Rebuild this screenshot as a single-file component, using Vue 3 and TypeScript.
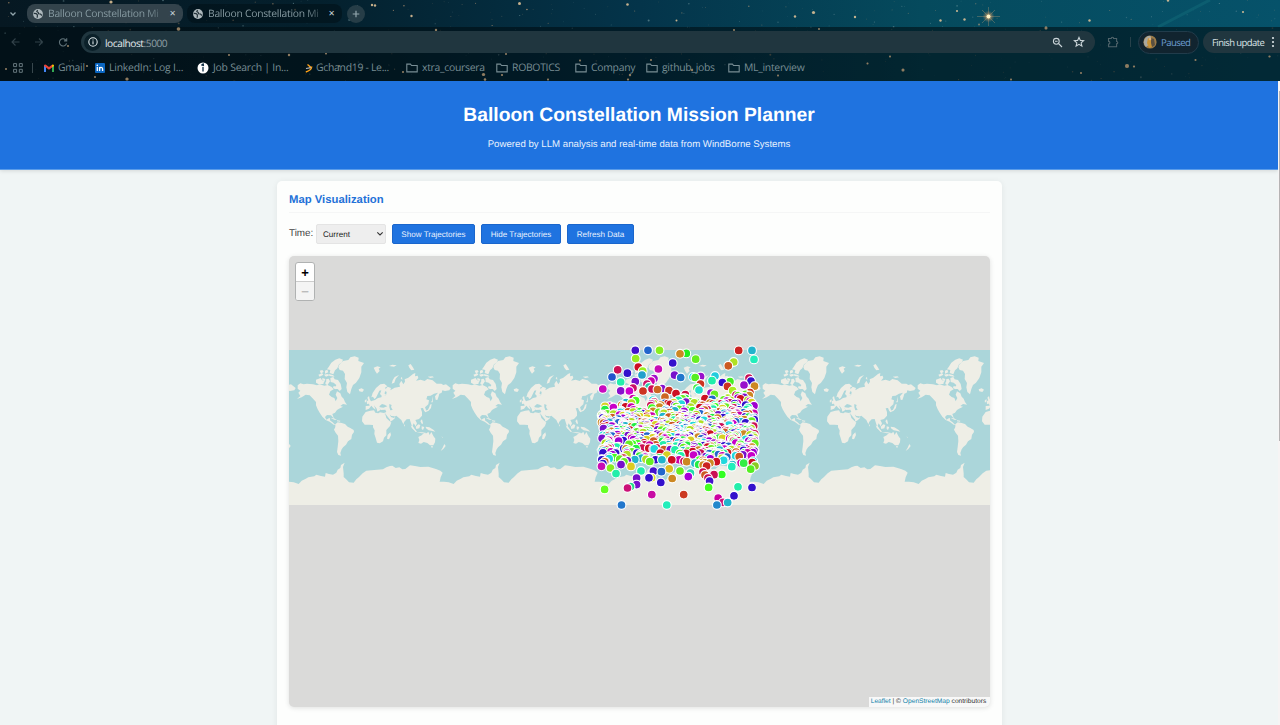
<script setup lang="ts">
interface Dot { x: number; y: number; c: string }
interface Star { x: number; y: number; r: number; o: number; c: string }

function rng(seed: number): () => number {
  let s = seed
  return () => {
    s = (s * 1664525 + 1013904223) % 4294967296
    return s / 4294967296
  }
}

const palette = [
  '#3311cc', '#cc00aa', '#cc1122', '#22eeaa', '#66ee22', '#2266cc', '#7711cc', '#cc1155',
  '#22b4cc', '#22ee44', '#cc5a22', '#cc8822', '#b0e022', '#d8d022', '#c800c8', '#22d8dd', '#44ff22', '#a000d0',
]

// Markers that stand clear of the main swarm: x, y, colour
const singles: [number, number, string][] = [
  [635.3, 350.3, '#4411cc'], [648, 350.3, '#2266cc'], [659.5, 350.3, '#88ee22'], [635.7, 358.6, '#99ee22'],
  [638.3, 367, '#cc1122'], [617.7, 369.8, '#cc1155'], [627.4, 373.2, '#3311cc'], [642.7, 371, '#99ee22'],
  [642, 375, '#22a0cc'], [658.4, 369, '#c80cb4'], [672.7, 363, '#3311cc'], [686.3, 353.4, '#22ee22'],
  [680, 353.8, '#cc8822'], [695.7, 359.2, '#66ee22'], [612, 377, '#2255cc'], [620.7, 382, '#22eeaa'],
  [635.3, 381.6, '#7711cc'], [602.8, 389, '#c80cc0'], [620.7, 390.8, '#8811cc'], [629.4, 391, '#cc00cc'],
  [674.5, 375.1, '#7711cc'], [680.7, 377.5, '#2277cc'], [700.6, 376.5, '#9911cc'], [693, 377, '#22ddee'],
  [695.2, 377.5, '#55ee22'], [715, 376, '#22ccdd'], [712, 380.7, '#22eeaa'], [738.7, 350.4, '#cc2222'],
  [752, 350.4, '#22b4cc'], [754, 359.4, '#22eebb'], [733.7, 362, '#b0e022'], [728.3, 365.8, '#cc5a22'],
  [722.4, 382.5, '#3311cc'], [730, 381.5, '#44ee22'], [727.5, 386.4, '#cc3322'], [732.7, 390.7, '#aaee22'],
  [749, 378, '#cc1155'], [751, 381, '#3311cc'], [744, 385, '#9911cc'], [754.5, 386.2, '#cc8822'],
  [750, 392.5, '#cc3322'], [654, 378.5, '#a011cc'], [651, 381, '#cc00aa'], [647, 384, '#cc1166'],
  [649, 387, '#22ccaa'], [652, 389, '#cc1155'], [643, 391, '#cc3322'], [657.5, 389.5, '#cc6622'],
  [662, 388.5, '#8811cc'], [669, 390.5, '#cc3322'], [676, 393.5, '#cc1122'], [685.3, 394.6, '#cc1144'],
  [700.5, 384, '#cc3322'], [699, 390, '#22ddcc'], [711, 393, '#9911cc'], [714.5, 394.4, '#66ee22'],
  [633, 388, '#cc1166'], [665, 397, '#cc6622'], [697, 388, '#44ee44'], [736, 395, '#cc1155'],
  [601.8, 459.8, '#3311cc'], [601.5, 466.3, '#c80cb4'], [610.5, 468, '#88ee22'], [616, 473.6, '#22eeaa'],
  [614.5, 457.6, '#44ff22'], [624, 461.8, '#66ee22'], [631, 466.4, '#ddcc22'], [641, 471, '#22eeaa'],
  [653.4, 471.2, '#4411cc'], [661.4, 471.7, '#2266cc'], [669.2, 468.8, '#ddbb22'], [680, 471, '#66ee22'],
  [677.7, 459.3, '#4411cc'], [639.5, 456, '#33ee33'], [702.8, 462.3, '#ddbb22'], [706.6, 466, '#cc2222'],
  [716.3, 461.7, '#cc1122'], [731.8, 466.7, '#22eebb'], [743.7, 463.2, '#33ee44'], [750.7, 469.2, '#55ee22'],
  [755, 466, '#88cc22'], [690.5, 473, '#22ddaa'], [688.3, 476.6, '#a800d8'], [672.2, 478.5, '#cc8822'],
  [651.7, 477.8, '#dde022'], [649, 477.8, '#3311cc'], [660.8, 482.5, '#3311cc'], [636.6, 478, '#7711cc'],
  [636.6, 484.6, '#7711cc'], [630.5, 486.5, '#22dd88'], [627.5, 488, '#cc1177'], [604.6, 489.4, '#66ff22'],
  [651.8, 494.6, '#c80ca4'], [683.7, 494.6, '#cc3a22'], [621.5, 505, '#2277cc'], [666.8, 505, '#22eebb'],
  [703, 472, '#cc1155'], [705, 475, '#cc5a22'], [708, 478, '#cc1155'], [709.6, 481, '#4411cc'],
  [714, 474.7, '#cc1155'], [721.8, 474.5, '#33ff22'], [708.6, 487.5, '#44ff22'], [738, 486.8, '#22eeaa'],
  [752, 487.5, '#3311cc'], [734, 495.8, '#3311cc'], [718.2, 498.2, '#cc00a0'], [723, 502.4, '#cc1177'],
  [716.9, 505, '#2288cc'], [727.7, 502.5, '#22b4cc'],
]

const rand = rng(42)
const dots: Dot[] = singles.map(([x, y, c]) => ({ x: x - 289, y: y - 256, c }))
for (let i = 0; i < 900; i++) {
  const t = (rand() + rand()) / 2
  const x = 601.5 + rand() * 153.5
  let y = 388 + t * 82
  const top = x < 625 ? 405 : x < 735 ? 398 : 392
  if (y < top) y = top + rand() * 55
  if (y > 466) y = 412 + rand() * 52
  dots.push({ x: x - 289, y: y - 256, c: palette[Math.floor(rand() * palette.length)] })
}
dots.sort((a, b) => a.y - b.y)

const rs = rng(7)
const stars: Star[] = []
for (let i = 0; i < 420; i++) {
  stars.push({
    x: rs() * 1280,
    y: rs() * 81,
    r: 0.3 + rs() * rs() * 0.8,
    o: 0.2 + rs() * 0.55,
    c: rs() > 0.5 ? '#d9ab7d' : '#7fa3a8',
  })
}
const bright: [number, number, number][] = [
  [519.5, 3.5, 1.5], [627.5, 4.5, 1.3], [411.5, 16, 1.2], [813.5, 12.5, 1.6], [795, 16.5, 1.2], [676.5, 20.5, 1],
  [855, 17, 1.2], [940.5, 20.5, 1.2], [957, 11, 1.1], [964.5, 19.5, 1.2], [1089.5, 20.5, 1.2], [1168, 0.5, 1.2],
  [178.5, 29, 1.8], [111, 2, 1.6], [483.5, 74.5, 1.6], [485, 79.5, 1.2], [127, 79, 1.6], [289, 55, 1.2],
  [1127, 66, 2], [903, 70, 1.5], [1046, 28, 1.5], [372, 5, 1.2], [375, 5.5, 1.2], [1243, 12, 1.1], [630, 75, 1.2],
  [436, 30, 1.2], [229, 55, 1], [326, 53.5, 1], [506, 54, 1], [734, 30, 1], [819, 29, 1], [867.500, 63.500, 1],
  [890, 56.500, 1], [1081, 73, 1], [1134, 66.500, 1.1], [1195.500, 60, 1], [1269.500, 56.500, 1.1], [628, 79.500, 1.1],
  [502, 75, 1.1], [548, 79.500, 1], [651, 60, 1], [580, 60.500, 1], [778, 75.500, 1], [87, 66, 1.1], [1011, 79.500, 1],
  [6, 69, 1], [95, 77, 1], [134, 52, 1], [68, 46, 1], [339, 66, 1], [310, 67, 1], [692, 70, 1.2], [403, 72, 1],
]
const dimmed = bright.filter((p) => p[1] > 27)
const worlds = [-1, 0, 1, 2, 3, 4]
const folders = [
  { t: 'xtra_coursera', w: 'f1' }, { t: 'ROBOTICS', w: 'f2' }, { t: 'Company', w: 'f3' },
  { t: 'github_jobs', w: 'f4' }, { t: 'ML_interview', w: 'f5' },
]
</script>

<template>
  <div class="screen">
    <div class="chrome">
      <svg class="sky" width="1280" height="81" viewBox="0 0 1280 81">
        <defs>
          <linearGradient id="skyg" x1="0" x2="1" y1="0" y2="0">
            <stop offset="0" stop-color="#061822" />
            <stop offset=".25" stop-color="#04202d" />
            <stop offset=".5" stop-color="#04344a" />
            <stop offset=".72" stop-color="#054a5d" />
            <stop offset="1" stop-color="#06526a" />
          </linearGradient>
          <radialGradient id="glow"><stop offset="0" stop-color="#ffe9b0" /><stop offset=".35" stop-color="#e0a868" stop-opacity=".6" /><stop offset="1" stop-color="#b08060" stop-opacity="0" /></radialGradient>
        </defs>
        <rect width="1280" height="81" fill="url(#skyg)" />
        <path d="M1158 27L1210 0" stroke="#1b7d85" stroke-width="3" opacity=".3" />
        <circle v-for="(s, i) in stars" :key="i" :cx="s.x" :cy="s.y" :r="s.r" :fill="s.c" :opacity="s.o" />
        <g fill="#e8c79a"><circle v-for="(b, i) in bright" :key="i" :cx="b[0]" :cy="b[1]" :r="b[2]" opacity=".85" /></g>
        <g stroke="#d8ab78" stroke-width=".6" opacity=".5"><path d="M977 16.500h23M988.500 7v19M982 10l13 13M982 23l13-13" /></g>
        <circle cx="988.500" cy="16.500" r="6" fill="url(#glow)" /><circle cx="988.500" cy="16.500" r="2" fill="#fff4c8" />
        <rect y="27" width="1280" height="54" fill="#000c12" opacity=".58" />
        <g fill="#c9a67c" opacity=".5"><circle v-for="(b, i) in dimmed" :key="i" :cx="b[0]" :cy="b[1]" :r="b[2]" /></g>
      </svg>

      <div class="tabs">
        <svg class="chev" width="8" height="6" viewBox="0 0 8 6"><path d="M1.500 1.500L4 4l2.500-2.500" /></svg>
        <div class="tab lit">
          <svg class="globe" width="10" height="10" viewBox="0 0 10 10"><circle cx="5" cy="5" r="4.900" /><path d="M.8 4.400l2.400.2 1.200 1.300-.2 2.800M4.600 1l-.8 1.500 1.500 1 .2 1.300 2 .2 1.400 1.500" /></svg>
          <span class="tt">Balloon Constellation Mi</span><span class="x">✕</span>
        </div>
        <div class="tab cur">
          <svg class="globe" width="10" height="10" viewBox="0 0 10 10"><circle cx="5" cy="5" r="4.900" /><path d="M.8 4.400l2.400.2 1.200 1.300-.2 2.800M4.600 1l-.8 1.500 1.500 1 .2 1.300 2 .2 1.400 1.500" /></svg>
          <span class="tt">Balloon Constellation Mi</span><span class="x">✕</span>
        </div>
        <div class="plus"><svg width="8" height="8" viewBox="0 0 8 8"><path d="M4 .7v6.600M.7 4h6.600" /></svg></div>
      </div>

      <div class="toolbar">
        <svg class="nav" width="62" height="12" viewBox="0 0 62 12">
          <g opacity=".38"><path d="M11.500 6H4M7.500 2.500L4 6l3.500 3.500M27 6h7.500M31 2.500L34.500 6 31 9.500" /></g>
          <path d="M58.500 4A3.600 3.600 0 1 0 59 7M59.200 2v2.600h-2.700" opacity=".75" transform="translate(-.5 .3)" />
        </svg>
        <div class="url">
          <span class="info"><svg width="10" height="10" viewBox="0 0 10 10"><circle cx="5" cy="5" r="4.200" /><path d="M5 4.300v3M5 2.500v1" /></svg></span>
          <span class="addr"><b>localhost</b>:5000</span>
          <svg class="mag" width="11" height="11" viewBox="0 0 11 11"><circle cx="4.300" cy="4.300" r="2.900" /><path d="M6.500 6.500l3.500 3.500M3 4.300h2.600" /></svg>
          <svg class="star" width="12" height="12" viewBox="0 0 12 12"><path d="M6 1.400l1.350 3 3.250.3-2.450 2.150.75 3.200L6 8.350l-2.900 1.700.75-3.200L1.400 4.700l3.250-.3z" /></svg>
        </div>
        <svg class="ext" width="12" height="12" viewBox="0 0 12 12"><path d="M1.500 2.500h2.700a1.200 1.200 0 0 1 2.400 0h3v3a1.200 1.200 0 0 1 0 2.400v2.800h-8V8a1.300 1.300 0 0 0 0-2.600z" /></svg>
        <i class="vbar"></i>
        <div class="paused">
          <svg width="14" height="14" viewBox="0 0 14 14"><circle cx="7" cy="7" r="6.600" fill="#9a7a48" /><path d="M2 3.500Q5-.5 8 1.500L7 9 3 12Q-.8 8 2 3.500" fill="#a9a9a0" /><path d="M5 3l4 2v7l-3 1-2-5z" fill="#c79338" /><path d="M8 3l3 1 1 6-3 2-1-4z" fill="#5a5040" /><circle cx="7" cy="4" r="1.300" fill="#ddb077" /></svg>
          <span>Paused</span>
        </div>
        <div class="finish"><span>Finish update</span><svg width="4" height="12" viewBox="0 0 4 12"><circle cx="2" cy="2" r="1.100" /><circle cx="2" cy="6" r="1.100" /><circle cx="2" cy="10" r="1.100" /></svg></div>
      </div>

      <div class="marks">
        <svg class="grid" width="10" height="10" viewBox="0 0 10 10"><path d="M.6.6h3v3h-3zM6.300.6h3v3h-3zM.6 6.300h3v3h-3zM6.300 6.300h3v3h-3z" /></svg>
        <i class="sep"></i>
        <div class="bm b1"><svg width="10" height="8" viewBox="0 0 10 8"><path d="M0 1v7h2V3z" fill="#4285f4" /><path d="M8 3v5h2V1z" fill="#34a853" /><path d="M0 1.200Q.8-.2 2 .8l3 2.300L8 .8v2.600L5 5.700 0 2z" fill="#ea4335" /><path d="M8 .8q1.300-1 2 .4V2L8 3.500z" fill="#fbbc04" /></svg><span>Gmail</span></div>
        <div class="bm b2"><svg width="10" height="10" viewBox="0 0 10 10"><rect width="10" height="10" rx="1" fill="#0a66c2" /><path d="M2.300 4v4M4.600 8V4M4.600 6q.2-1.800 1.600-1.600Q7.600 4.500 7.600 6v2" stroke="#fff" stroke-width="1.300" fill="none" /><circle cx="2.300" cy="2.400" r=".8" fill="#fff" /></svg><span>LinkedIn: Log I...</span></div>
        <div class="bm b3"><svg width="12" height="12" viewBox="0 0 12 12"><circle cx="6" cy="6" r="5.500" fill="#fff" /><circle cx="6.100" cy="3.300" r="1" fill="#0a2a40" /><path d="M6 5v4.500M4.500 3.500Q5 2 7 2" stroke="#0a2a40" stroke-width="1.300" fill="none" /></svg><span>Job Search | In...</span></div>
        <div class="bm b4"><svg width="9" height="10" viewBox="0 0 9 10"><path d="M2.500 1.500L5.500 4M6.800 3.500q-.5 4-6 5.500" stroke="#ffa116" stroke-width="1.400" fill="none" /><path d="M1 5.500l5-.8" stroke="#b8b8b8" stroke-width="1.200" /></svg><span>Gchand19 - Le...</span></div>
        <div v-for="f in folders" :key="f.t" :class="['bm', f.w]">
          <svg class="folder" width="12" height="10" viewBox="0 0 12 10"><path d="M.8 8.900V1.100h3.600l1.200 1.400h5.600v6.400z" /></svg><span>{{ f.t }}</span>
        </div>
      </div>
    </div>

    <div class="page">
      <header>
        <h1>Balloon Constellation Mission Planner</h1>
        <p>Powered by LLM analysis and real-time data from WindBorne Systems</p>
      </header>
      <main>
        <h2>Map Visualization</h2>
        <div class="controls">
          <label>Time:</label>
          <div class="select"><span>Current</span><svg width="8" height="6" viewBox="0 0 8 6"><path d="M1.300 1.300L4 4l2.700-2.700" /></svg></div>
          <button class="k1">Show Trajectories</button>
          <button class="k2">Hide Trajectories</button>
          <button class="k3">Refresh Data</button>
        </div>
        <div class="map">
          <svg class="tiles" width="701" height="155" viewBox="12 16 2103 465">
            <defs>
              <g id="land">
                <!-- North America -->
                <path d="M38 122L46 116 56 119 66 117 84 119 96 122 104 119 118 123 128 121 140 127 146 134 136 140 132 150 140 157 148 160 152 170 157 160 152 150 156 140 166 146 170 156 176 162 180 172 186 180 174 178 166 184 174 186 162 192 156 196 150 204 142 208 147 222 138 212 126 211 120 217 124 225 134 219 136 228 142 232 148 238 154 240 146 240 134 231 122 226 112 216 104 204 98 194 93 182 93 172 82 160 74 152 62 150 50 158 36 163 46 154 40 144 46 138 38 132z" />
                <!-- Canadian Arctic -->
                <path d="M93 105l14-5 4 7 7 2-3 9-14 1-8-5zM112 100l9 3-2 6-7-3zM104 78l8-2 4 5-8 6zM120 78l7-3 3 8-10 4zM100 90l12-4 3 4-11 6zM117 90l10-2 6 4-10 4zM130 88l14 3 5 5-15-2zM136 100l9-3 4 7 10 2 8 12 3 15-6 6-6-6-8-4 4-8-8-7-9-2zM124 103l7-1 4 8-7 10-5-6zM131 67l8-13 12-9 12-4 11 4-4 9-8 5-5 12-7 6-5 12-11-4 2-9-10-2zM122 112l8 2-2 8-7-4zM146 124l8 2-3 8-7-4zM107 110l12-2-2 5-9 2z" />
                <!-- Greenland, Iceland, Cuba -->
                <path d="M162 61L174 49 190 46 196 38 209 35 221 39 220 49 237 55 229 66 229 83 223 100 213 114 204 121 199 133 195 149 187 142 184 128 186 115 179 103 180 88 174 78 164 76 160 68zM221 134l9-3 7 4-5 7-9-2zM137 220l10 1 9 5-8-1zM156 227l10 1-1 3-9-1z" />
                <!-- South America -->
                <path d="M151 239L158 233 170 235 180 238 188 246 196 250 206 256 207 262 201 270 199 283 189 290 183 300 175 307 170 314 166 325 168 333 160 331 156 322 158 307 160 289 159 273 152 264 147 255 151 247z" />
                <!-- Africa, Madagascar -->
                <path d="M242 202L256 198 267 197 271 204 280 206 285 203 297 205 303 217 309 231 319 233 315 244 304 256 304 272 297 279 294 290 284 296 276 294 272 280 268 268 269 257 264 248 264 241 252 240 239 240 231 230 232 216zM316 263l2 8-6 13-6-2 2-11z" />
                <!-- British Isles, Nordic countries -->
                <path d="M245 170l5-3-3-8 5-5 2 9 5 9-8 5-5 1zM239 168l5-5 1 6-5 5zM259 158L263 145 273 130 286 119 298 117 307 125 300 129 304 136 298 146 304 151 291 154 285 148 289 137 283 138 278 149 273 159 268 163 264 156z" />
                <!-- Eurasia -->
                <path d="M242 196L242 184 254 183 251 175 260 169 270 166 279 160 289 158 291 151 303 152 305 143 300 135 308 126 318 130 316 137 329 129 345 126 343 118 349 108 355 119 360 111 359 104 370 99 384 88 391 85 390 95 398 93 400 100 393 108 407 105 419 109 427 103 443 107 455 117 469 117 475 121 483 119 497 130 493 137 480 139 472 137 470 144 463 147 461 155 457 166 452 165 450 155 459 144 447 147 437 153 427 154 424 164 432 167 430 179 420 188 424 198 418 200 414 190 407 191 411 202 411 213 402 223 391 226 396 236 392 245 386 236 383 243 389 255 383 252 379 239 374 223 365 224 358 231 355 239 349 226 341 219 334 213 326 217 331 219 323 227 309 235 303 226 299 213 297 205 304 202 301 195 287 196 282 186 286 196 277 201 275 192 267 182 272 195 265 190 259 183 252 192z" />
                <!-- Seas cut out of Eurasia -->
                <path class="sea" d="M283 185l8-7 8 2 8 5-12 4-10-1zM313 178l7 3-2 6 5 9-7 1-3-9zM300 205l7 10 9 11-2 4-10-10zM314 209l5 5 10 1-2 5-9-3z" />
                <!-- Arctic islands -->
                <path d="M266 69l11-4 10 3-6 4 3 7-8 8-5-7zM312 64l10-4 13 2-8 4zM320 117l3-10 6-10 13-6-10 11-4 12zM370 62l7-4 6 9 5 8-9 2-6-8zM428 96l14-1 5 3-11 2zM347 101l4-5 1 10z" />
                <!-- Japan, South-East Asia -->
                <path d="M435 180l5-2-2 12-7 8-10 5-2-3 10-5 4-8zM438 173l4-6-1-13 3 11-1 8zM377 242l9 7 10 12-4 1-12-13zM392 246l8-7 6 2-3 10-9 2zM406 229l5-5 3 12-3 3zM410 245l8 2-4 9-4-3zM422 246l11 2 12 7 6 6-12-3-8-1-8-6zM394 262l18 1 12 2-13 1zM356 239l4 2-1 5z" />
                <!-- Australia, New Zealand -->
                <path d="M400 277L410 272 417 265 425 266 430 261 434 271 439 262 445 274 451 282 450 293 445 302 435 302 427 295 416 292 408 297 400 295 403 286zM438 304l6 1-3 6zM478 298l4 6-7 9-8 6 6-10zM469 274l5 5-1 1z" />
                <!-- Antarctica -->
                <path d="M12 411L26 413 41 418 50 408 61 403 70 398 88 395 94 390 108 394 120 396 122 385 132 388 144 390 154 384 158 375 166 370 168 361 179 354 174 367 176 386 176 397 185 405 192 413 206 414 214 404 222 397 233 386 244 378 268 376 294 374 304 368 315 364 322 363 332 370 343 368 352 374 361 373 375 362 390 364 406 367 430 366 443 370 455 374 466 378 473 384 467 398 464 411 477 411 477 481 12 481z" />
              </g>
            </defs>
            <rect x="12" y="16" width="2103" height="465" fill="#abd6da" />
            <use v-for="k in worlds" :key="k" href="#land" :x="k * 465" />
          </svg>
          <svg class="dots" width="701" height="451" viewBox="0 0 701 451">
            <circle v-for="(d, i) in dots" :key="i" :cx="d.x" :cy="d.y" r="4.400" :fill="d.c" />
          </svg>
          <div class="zoom"><span>+</span><span class="off">−</span></div>
          <div class="attr"><a>Leaflet</a> | © <a>OpenStreetMap</a> contributors</div>
        </div>
      </main>
      <div class="scroll"><i></i></div>
    </div>
  </div>
</template>

<style>
html, body { margin: 0; overflow: hidden; }
</style>
<style scoped>
* { box-sizing: border-box; }
.screen { width: 1280px; height: 725px; overflow: hidden; display: flex; flex-direction: column; font-family: "Liberation Sans", Arial, sans-serif; text-rendering: geometricPrecision; }
.chrome { position: relative; height: 81px; flex: none; font-family: "Open Sans", "Noto Sans", sans-serif; font-size: 10.3px; color: #7d9299; overflow: hidden; }
.sky { position: absolute; left: 0; top: 0; }
svg { display: block; flex: none; }
.tabs, .toolbar, .marks { position: relative; display: flex; align-items: center; }
.tabs > *, .toolbar > *, .marks > * { flex: none; }
.tabs { height: 27px; padding-left: 9px; }
.chev { fill: none; stroke: #91a5ac; stroke-width: 1.3; margin-right: 10px; }
.tab { display: flex; align-items: center; height: 19px; width: 156px; padding: 0 6px 0 6px; border-radius: 8px; }
.lit { background: rgba(55, 71, 79, .92); }
.cur { margin-left: 4px; width: 155px; background: rgba(0, 14, 20, .5); }
.globe circle { fill: #aeb9bd; }
.globe path { fill: none; stroke: #25343b; stroke-width: 1.2; }
.tt { flex: 1; margin-left: 5px; white-space: nowrap; font-size: 10.3px; letter-spacing: -.25px; color: #869aa1; -webkit-mask-image: linear-gradient(90deg, #000 82%, transparent); mask-image: linear-gradient(90deg, #000 82%, transparent); }
.x { width: 9px; flex: none; text-align: center; font-family: "DejaVu Sans", sans-serif; font-size: 8px; color: #c5d0d4; }
.plus { width: 18px; height: 18px; margin-left: 5px; border-radius: 50%; background: #263d47; display: grid; place-items: center; }
.plus svg { stroke: #93a7ae; stroke-width: 1.2; }
.toolbar { height: 30px; }
.nav { margin-left: 8px; fill: none; stroke: #80939a; stroke-width: 1.1; }
.url { display: flex; align-items: center; width: 1014px; height: 22px; margin-left: 11px; padding: 0 10px 0 3px; border-radius: 11px; background: #20363f; color: #8d9da3; }
.info { width: 17px; height: 17px; border-radius: 50%; background: #0b2029; display: grid; place-items: center; margin-right: 4px; }
.info svg { fill: none; stroke: #dce5e8; stroke-width: 1.1; }
.addr { flex: 1; font-size: 10.2px; letter-spacing: -.46px; padding-top: 1px; }
.addr b { font-weight: 400; color: #e2eaed; }
.mag, .star { fill: none; stroke: #c9d4d8; stroke-width: 1.1; }
.mag { margin-right: 10px; }
.ext { margin-left: 12px; fill: none; stroke: #50646b; stroke-width: 1.1; }
.vbar { width: 1px; height: 10px; margin-left: 11px; background: #27414a; }
.paused { display: flex; align-items: center; gap: 4px; width: 61px; height: 23px; margin-left: 7px; padding-left: 4px; border: 1px solid #213c4b; border-radius: 12px; background: #11242f; color: #6f9fd2; font-size: 9.6px; }
.paused span { letter-spacing: -.6px; }
.finish { display: flex; align-items: center; gap: 6px; width: 90px; height: 22px; margin-left: 4px; padding-left: 9px; border-radius: 11px; background: #20363f; color: #dbe4e7; font-size: 9.5px; white-space: nowrap; }
.finish span { width: 53px; letter-spacing: -.58px; }
.finish svg { fill: #dbe4e7; }
.marks { height: 20px; padding: 1px 0 0 13px; font-size: 10.4px; letter-spacing: -.28px; color: #788d94; }
.grid { fill: none; stroke: #66777d; stroke-width: 1; }
.sep { width: 1px; height: 10px; background: #38474d; margin-left: 9px; }
.bm { display: flex; align-items: center; white-space: nowrap; }
.bm span { margin-left: 4px; }
.b1 { margin-left: 11px; width: 51px; }
.b2 { width: 102px; letter-spacing: -.2px; }
.b3 { width: 108px; letter-spacing: -.22px; }
.b4 { width: 101px; }
.b4 span { margin-left: 2px; }
.f1 { width: 90px; }
.f2 { width: 79px; }
.f3 { width: 71px; }
.f4 { width: 82px; }
.folder { fill: none; stroke: #788d94; stroke-width: 1.1; }
.page { position: relative; flex: 1; background: #f0f5f5; overflow: hidden; }
header { height: 89px; width: 1278px; padding-top: 23px; background: #1f73e0; border-bottom: 1px solid #5a9cea; color: #fff; text-align: center; box-shadow: 0 1px 4px rgba(0, 0, 0, .12); }
h1 { margin: 0; font-size: 19.3px; line-height: 23px; }
header p { margin: 10px 0 0; font-size: 9.67px; line-height: 16px; color: #e8f1fd; }
main { width: 725px; height: 580px; margin: 11px 0 0 277px; padding: 11px 12px 0; border-radius: 5px; background: #fdfefd; box-shadow: 0 1px 6px rgba(0, 0, 0, .07); }
h2 { margin: 0; height: 21px; border-bottom: 1px solid #f5f6f6; color: #2371d8; font-size: 11.3px; line-height: 16px; }
.controls { display: flex; align-items: center; height: 20px; margin-top: 11px; }
label { width: 27px; font-size: 9.9px; color: #444; white-space: nowrap; padding-bottom: 1px; }
.select { display: flex; align-items: center; justify-content: space-between; width: 70px; height: 20px; padding: 0 1px 0 6px; border: 1px solid #e4e4e4; border-radius: 2px; background: #eee; font-size: 8.1px; color: #222; }
.select svg { fill: none; stroke: #333; stroke-width: 1.1; }
button { height: 20px; padding: 0; border: 1px solid #1a66cc; border-radius: 2px; background: #1f73e0; color: #e8f1fd; font: 8.1px "Liberation Sans", Arial, sans-serif; margin-left: 6px; text-rendering: geometricPrecision; }
.k1 { width: 83px; } .k2 { width: 80px; } .k3 { width: 67px; }
.map { position: relative; width: 701px; height: 451px; margin-top: 12px; border-radius: 5px; overflow: hidden; background: #dadad9; box-shadow: 0 1px 5px rgba(0, 0, 0, .12); }
.tiles { position: absolute; left: 0; top: 94px; fill: #eeeee6; }
.sea { fill: #abd6da; }
.dots { position: absolute; left: 0; top: 0; stroke: #fff; stroke-width: 1.1; }
.zoom { position: absolute; left: 6px; top: 6px; width: 20px; height: 39px; border: 1px solid #b0b2b2; border-radius: 3px; background: #fff; overflow: hidden; }
.zoom span { display: block; height: 18px; text-align: center; font: bold 13px/19px "Liberation Sans", Arial, sans-serif; color: #000; }
.zoom .off { height: 20px; border-top: 1px solid #ccc; background: #f4f4f4; color: #bbb; }
.attr { position: absolute; right: 0; bottom: 0; width: 121px; height: 10px; padding-right: 2px; background: rgba(255, 255, 255, .8); font-size: 6.65px; line-height: 10px; text-align: center; color: #333; white-space: nowrap; }
.attr a { color: #0f82a8; }
.scroll { position: absolute; right: 0; top: 0; width: 2px; height: 644px; padding: 10px 0 0 1px; background: #f6f4f4; }
.scroll i { display: block; width: 1px; height: 350px; background: #b5b3b4; }
</style>
